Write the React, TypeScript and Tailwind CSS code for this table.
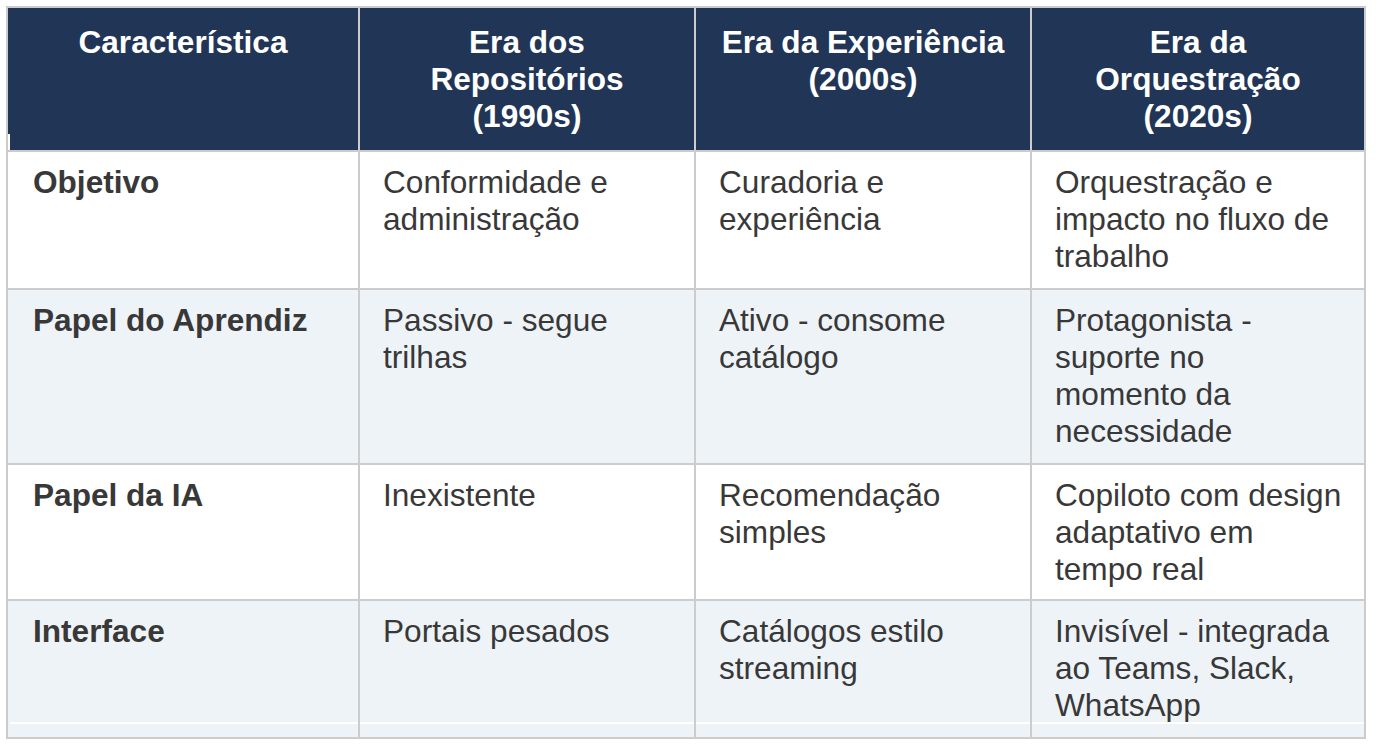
import React from 'react'

const headers = [
  'Característica',
  'Era dos Repositórios (1990s)',
  'Era da Experiência (2000s)',
  'Era da Orquestração (2020s)',
]

const rows = [
  ['Objetivo', 'Conformidade e administração', 'Curadoria e experiência', 'Orquestração e impacto no fluxo de trabalho'],
  ['Papel do Aprendiz', 'Passivo - segue trilhas', 'Ativo - consome catálogo', 'Protagonista - suporte no momento da necessidade'],
  ['Papel da IA', 'Inexistente', 'Recomendação simples', 'Copiloto com design adaptativo em tempo real'],
  ['Interface', 'Portais pesados', 'Catálogos estilo streaming', 'Invisível - integrada ao Teams, Slack, WhatsApp'],
]

export default function App() {
  return (
    <div className="min-h-screen bg-white pt-[6px] pl-[6px] font-['Liberation_Sans',Arial,sans-serif] text-[31.6px] leading-[37px]">
      {/* table grid: gap colour doubles as the cell borders */}
      <div className="grid w-[1360px] grid-cols-[350px_334px_334px_332px] gap-[2px] bg-[#cccccc] p-[2px]">
        {headers.map((h, i) => (
          <div key={h} className="relative bg-[#213557] px-[22px] pt-4 pb-[15px] text-center font-bold text-white">
            {h}
            {i === 0 && <div className="absolute bottom-0 left-0 h-[16px] w-[2px] bg-white" />}
          </div>
        ))}

        {rows.map((row, r) =>
          row.map((cell, c) => (
            <div
              key={r + '-' + c}
              className={
                'relative pr-[20px] pt-3 text-[#383838] ' +
                (r === 2 ? 'pb-[11px] ' : 'pb-[13px] ') +
                (r % 2 === 1 ? 'bg-[#eef3f8] ' : 'bg-white ') +
                (c === 0 ? 'pl-[25px] font-bold' : 'pl-[23px]')
              }
            >
              {cell}
              {r === rows.length - 1 && (
                <div className={'absolute bottom-[13px] right-0 h-[2px] bg-white ' + (c === 0 ? 'left-[2px]' : 'left-0')} />
              )}
            </div>
          ))
        )}
      </div>
    </div>
  )
}
